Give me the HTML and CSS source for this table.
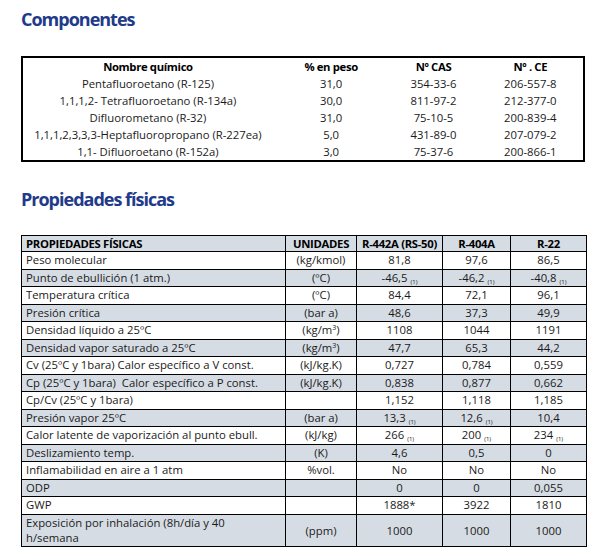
FILE: index.html
```html
<!DOCTYPE html>
<html lang="es">
<head>
<meta charset="utf-8">
<title>Componentes</title>
<link rel="stylesheet" href="styles.css">
</head>
<body>
<div class="page">
  <h2 class="title">Componentes</h2>
  <table class="comp">
    <colgroup><col class="c1"><col class="c2"><col class="c3"><col class="c4"></colgroup>
    <thead>
      <tr><th>Nombre químico</th><th>% en peso</th><th>Nº CAS</th><th>Nº . CE</th></tr>
    </thead>
    <tbody>
      <tr><td>Pentafluoroetano (R-125)</td><td>31,0</td><td>354-33-6</td><td>206-557-8</td></tr>
      <tr><td>1,1,1,2- Tetrafluoroetano (R-134a)</td><td>30,0</td><td>811-97-2</td><td>212-377-0</td></tr>
      <tr><td>Difluorometano (R-32)</td><td>31,0</td><td>75-10-5</td><td>200-839-4</td></tr>
      <tr><td>1,1,1,2,3,3,3-Heptafluoropropano (R-227ea)</td><td>5,0</td><td>431-89-0</td><td>207-079-2</td></tr>
      <tr><td>1,1- Difluoroetano (R-152a)</td><td>3,0</td><td>75-37-6</td><td>200-866-1</td></tr>
    </tbody>
  </table>

  <h2 class="title title2">Propiedades físicas</h2>
  <table class="props">
    <colgroup><col class="p1"><col class="p2"><col class="p3"><col class="p4"><col class="p5"></colgroup>
    <thead>
      <tr class="alt"><th class="name">PROPIEDADES FÍSICAS</th><th>UNIDADES</th><th>R-442A (RS-50)</th><th>R-404A</th><th>R-22</th></tr>
    </thead>
    <tbody>
      <tr><td class="name">Peso molecular</td><td>(kg/kmol)</td><td>81,8</td><td>97,6</td><td>86,5</td></tr>
      <tr class="alt"><td class="name">Punto de ebullición (1 atm.)</td><td>(ºC)</td><td>-46,5 <sub>(1)</sub></td><td>-46,2 <sub>(1)</sub></td><td>-40,8 <sub>(1)</sub></td></tr>
      <tr><td class="name">Temperatura crítica</td><td>(ºC)</td><td>84,4</td><td>72,1</td><td>96,1</td></tr>
      <tr class="alt"><td class="name">Presión crítica</td><td>(bar a)</td><td>48,6</td><td>37,3</td><td>49,9</td></tr>
      <tr><td class="name">Densidad líquido a 25ºC</td><td>(kg/m<sup>3</sup>)</td><td>1108</td><td>1044</td><td>1191</td></tr>
      <tr class="alt"><td class="name">Densidad vapor saturado a 25ºC</td><td>(kg/m<sup>3</sup>)</td><td>47,7</td><td>65,3</td><td>44,2</td></tr>
      <tr><td class="name">Cv (25ºC y 1bara) Calor específico a V const.</td><td>(kJ/kg.K)</td><td>0,727</td><td>0,784</td><td>0,559</td></tr>
      <tr class="alt"><td class="name">Cp (25ºC y 1bara)&nbsp; Calor específico a P const.</td><td>(kJ/kg.K)</td><td>0,838</td><td>0,877</td><td>0,662</td></tr>
      <tr><td class="name">Cp/Cv (25ºC y 1bara)</td><td></td><td>1,152</td><td>1,118</td><td>1,185</td></tr>
      <tr class="alt"><td class="name">Presión vapor 25ºC</td><td>(bar a)</td><td>13,3 <sub>(1)</sub></td><td>12,6 <sub>(1)</sub></td><td>10,4</td></tr>
      <tr><td class="name">Calor latente de vaporización al punto ebull.</td><td>(kJ/kg)</td><td>266 <sub>(1)</sub></td><td>200 <sub>(1)</sub></td><td>234 <sub>(1)</sub></td></tr>
      <tr class="alt"><td class="name">Deslizamiento temp.</td><td>(K)</td><td>4,6</td><td>0,5</td><td>0</td></tr>
      <tr><td class="name">Inflamabilidad en aire a 1 atm</td><td>%vol.</td><td>No</td><td>No</td><td>No</td></tr>
      <tr class="alt"><td class="name">ODP</td><td></td><td>0</td><td>0</td><td>0,055</td></tr>
      <tr><td class="name">GWP</td><td></td><td>1888*</td><td>3922</td><td>1810</td></tr>
      <tr class="alt tall"><td class="name">Exposición por inhalación (8h/día y 40<br>h/semana</td><td>(ppm)</td><td>1000</td><td>1000</td><td>1000</td></tr>
    </tbody>
  </table>
</div>
</body>
</html>
```

FILE: styles.css
```css
html, body {
  margin: 0;
  padding: 0;
  background: #ffffff;
}

.page {
  padding: 7px 0 0 21px;
  font-family: "Open Sans", "DejaVu Sans", sans-serif;
  color: #1a1a1a;
}

.title {
  margin: 0;
  font-size: 18px;
  line-height: 24px;
  font-weight: 700;
  color: #213a8a;
  letter-spacing: -1px;
}

/* Components table */
.comp {
  margin-top: 25px;
  width: 564px;
  border: 2px solid #000;
  border-collapse: collapse;
  table-layout: fixed;
  font-size: 11.3px;
}

.comp .c1 { width: 250px; }
.comp .c2 { width: 116px; }
.comp .c3 { width: 88px; }
.comp .c4 { width: 106px; }

.comp th,
.comp td {
  padding: 0;
  height: 17px;
  line-height: 17px;
  text-align: center;
  white-space: nowrap;
}

.comp th {
  font-weight: 700;
  letter-spacing: -0.35px;
  color: #000;
}

/* Properties title spacing */
.title2 {
  margin-top: 25px;
}

/* Properties table */
.props {
  margin-top: 24px;
  width: 565px;
  border-collapse: collapse;
  table-layout: fixed;
  font-size: 11.3px;
  border: 1px solid #000;
}

.props .p1 { width: 264px; }
.props .p2 { width: 71px; }
.props .p3 { width: 86px; }
.props .p4 { width: 68px; }
.props .p5 { width: 76px; }

.props th,
.props td {
  border: 1px solid #000;
  padding: 0 4px;
  height: 16.5px;
  line-height: 14px;
  text-align: center;
  white-space: nowrap;
}

.props thead th {
  height: 15px;
  font-weight: 700;
  letter-spacing: -0.3px;
  color: #000;
}

.props .name {
  text-align: left;
}

.props tr.alt {
  background: #d6dce4;
}

.props tr.tall td {
  height: 31.3px;
  line-height: 15px;
}

.props sub {
  font-size: 6px;
  vertical-align: -2px;
  line-height: 0;
}

.props sup {
  font-size: 7px;
  vertical-align: 4px;
  line-height: 0;
}
```
